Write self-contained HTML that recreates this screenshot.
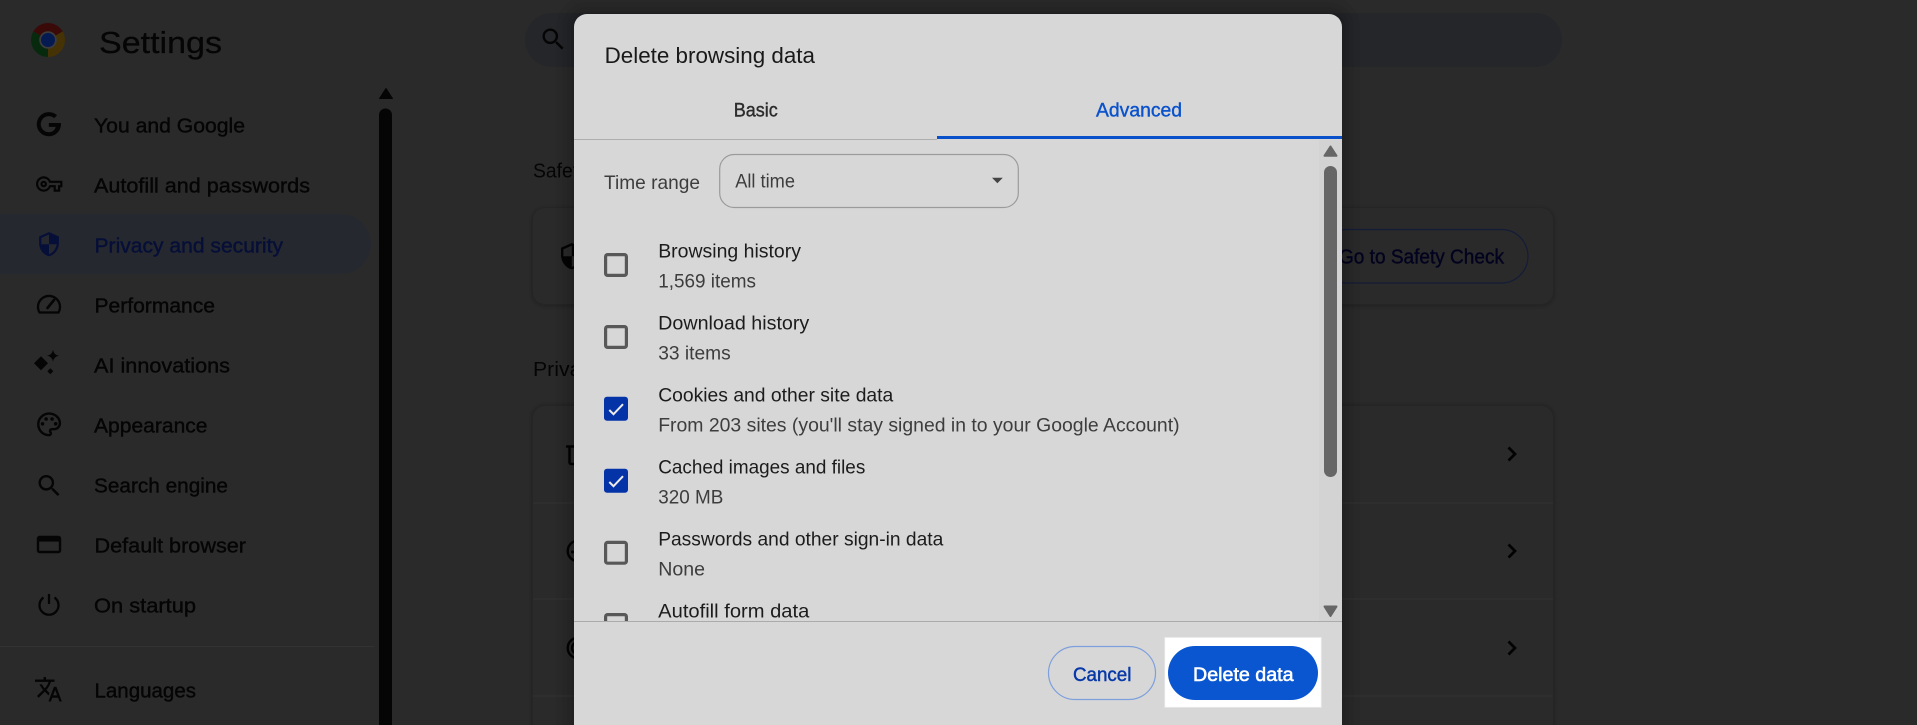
<!DOCTYPE html>
<html lang="en"><head><meta charset="utf-8"><title>Settings</title>
<style>
html,body{margin:0;padding:0;width:1917px;height:725px;overflow:hidden;background:#2a2a2a}
svg{display:block}
text{font-family:"Liberation Sans",sans-serif;white-space:pre}
.n{font-size:20.5px;fill:#050505;stroke:#050505;stroke-width:.4}
.l{font-size:19.5px;fill:#1c1c1c}
.s{font-size:19.5px;fill:#3d3d3d}
.i{fill:#050505}
</style></head><body>
<svg width="1917" height="725" viewBox="0 0 1917 725" xmlns="http://www.w3.org/2000/svg">
<defs>
<path id="sec" d="M12 1 3 5v6c0 5.55 3.84 10.74 9 12 5.16-1.26 9-6.45 9-12V5l-9-4zm0 10.99h7c-.53 4.12-3.28 7.79-7 8.94V12H5V6.3l7-3.11v8.8z"/>
<path id="srch" d="M15.5 14h-.79l-.28-.27A6.471 6.471 0 0 0 16 9.5 6.5 6.5 0 1 0 9.5 16c1.61 0 3.09-.59 4.23-1.57l.27.28v.79l5 4.99L20.49 19l-4.99-5zm-6 0C7.01 14 5 11.99 5 9.5S7.01 5 9.5 5 14 7.01 14 9.5 11.99 14 9.5 14z"/>
</defs>
<rect width="1917" height="725" fill="#2a2a2a"/>

<!-- header -->
<path d="M48 40 L62.7 31.5 A17 17 0 0 0 33.3 31.5 Z" fill="#3a0a08"/>
<path d="M48 40 L33.3 31.5 A17 17 0 0 0 48 57 Z" fill="#072a0e"/>
<path d="M48 40 L48 57 A17 17 0 0 0 62.7 31.5 Z" fill="#463305"/>
<circle cx="48" cy="40" r="8.800" fill="#3c3c3c"/><circle cx="48" cy="40" r="7" fill="#061a52"/>
<text x="99" y="53" font-size="31" fill="#050505" stroke="#050505" stroke-width=".25" textLength="123" lengthAdjust="spacingAndGlyphs">Settings</text>
<rect x="525" y="13" width="1037" height="54" rx="27" fill="#25262a"/>
<use href="#srch" transform="translate(538.9 24.9) scale(1.2)" fill="#050505"/>

<!-- sidebar -->
<path d="M0 214 H341 a30 30 0 0 1 0 60 H0 Z" fill="#25282f"/>
<rect x="0" y="646" width="374" height="1" fill="#323232"/>
<path d="M386 88.500 L392.500 98.500 H379.500 Z" fill="#050505" stroke="#050505" stroke-linejoin="round"/>
<path d="M379 115 a6.500 6.500 0 0 1 13 0 V725 H379 Z" fill="#050505"/>

<g class="i">
<path transform="translate(33 108.6) scale(1.3)" d="M21.35 11.1H12.18v2.98h5.27c-.5 2.6-2.77 4.1-5.27 4.1a6.2 6.2 0 1 1 4.1-10.84l2.2-2.2A9.3 9.3 0 0 0 12.18 2.7 9.3 9.3 0 1 0 21.5 12c0-.3-.05-.6-.15-.9z"/>
<path transform="translate(36 170.8) scale(1.1)" d="M22 19h-6v-4h-2.68c-1.14 2.42-3.6 4-6.32 4-3.86 0-7-3.14-7-7s3.14-7 7-7c2.72 0 5.17 1.58 6.32 4H24v6h-2v4zm-4-2h2v-4h2v-2H11.94l-.23-.67C11.01 8.34 9.11 7 7 7c-2.76 0-5 2.24-5 5s2.24 5 5 5c2.11 0 4.01-1.34 4.71-3.33l.23-.67H18v4zM7 15c-1.65 0-3-1.35-3-3s1.35-3 3-3 3 1.35 3 3-1.35 3-3 3zm0-4c-.55 0-1 .45-1 1s.45 1 1 1 1-.45 1-1-.45-1-1-1z"/>
<use href="#sec" transform="translate(35.8 231) scale(1.1)" fill="#060f38"/>
<path d="M39.5 312.5 a11 11 0 1 1 19 0 z" fill="none" stroke="#050505" stroke-width="2.3" stroke-linejoin="round"/>
<path d="M47.5 308 L54 300" stroke="#050505" stroke-width="2.6" stroke-linecap="round"/>
<path d="M41 356.3 L48 363.3 L41 370.3 L34 363.3 Z"/>
<path d="M53 349.7 Q53.8 354.9 59 355.7 Q53.8 356.5 53 361.7 Q52.2 356.5 47 355.7 Q52.2 354.9 53 349.7 Z"/>
<path d="M50.3 368.3 L53.3 371.3 L50.3 374.3 L47.3 371.3 Z"/>
<g transform="translate(34.7 410) scale(1.2)">
<path d="M12 22C6.49 22 2 17.51 2 12S6.49 2 12 2s10 4.04 10 9c0 3.31-2.69 6-6 6h-1.77c-.28 0-.5.22-.5.5 0 .12.05.23.13.33.41.47.64 1.06.64 1.67A2.5 2.5 0 0 1 12 22zm0-18c-4.41 0-8 3.59-8 8s3.59 8 8 8c.28 0 .5-.22.5-.5a.54.54 0 0 0-.14-.35c-.41-.46-.63-1.05-.63-1.65a2.5 2.5 0 0 1 2.5-2.5H16c2.21 0 4-1.79 4-4 0-3.86-3.59-7-8-7z"/>
<circle cx="6.5" cy="11.5" r="1.5"/><circle cx="9.5" cy="7.5" r="1.5"/><circle cx="14.5" cy="7.5" r="1.5"/><circle cx="17.5" cy="11.5" r="1.5"/>
</g>
<use href="#srch" transform="translate(34.9 471.4) scale(1.2)"/>
<rect x="38" y="537" width="22" height="15" rx="1.5" fill="none" stroke="#050505" stroke-width="2.4"/>
<rect x="38" y="537" width="22" height="4.6"/>
<path d="M43.5 597.5 a9.5 9.5 0 1 0 11 0 M49 594 V604" fill="none" stroke="#050505" stroke-width="2.3"/>
<path transform="translate(33.8 674.6) scale(1.22)" d="M12.87 15.07l-2.54-2.51.03-.03A17.52 17.52 0 0 0 14.07 6H17V4h-7V2H8v2H1v1.99h11.17C11.5 7.92 10.44 9.75 9 11.35 8.07 10.32 7.3 9.19 6.69 8h-2c.73 1.63 1.73 3.17 2.98 4.56l-5.09 5.02L4 19l5-5 3.11 3.11.76-2.04zM18.5 10h-2L12 22h2l1.12-3h4.75L21 22h2l-4.5-12zm-2.62 7l1.62-4.33L19.12 17h-3.24z"/>
</g>

<text class="n" x="94" y="132.7" textLength="151" lengthAdjust="spacingAndGlyphs">You and Google</text>
<text class="n" x="94" y="192.7" textLength="216" lengthAdjust="spacingAndGlyphs">Autofill and passwords</text>
<text class="n" x="94.500" y="252.7" textLength="188.500" lengthAdjust="spacingAndGlyphs" style="fill:#060f38;stroke:#060f38">Privacy and security</text>
<text class="n" x="94.500" y="312.7" textLength="120.500" lengthAdjust="spacingAndGlyphs">Performance</text>
<text class="n" x="94" y="372.7" textLength="136" lengthAdjust="spacingAndGlyphs">AI innovations</text>
<text class="n" x="94" y="432.7" textLength="113.500" lengthAdjust="spacingAndGlyphs">Appearance</text>
<text class="n" x="94" y="492.7" textLength="134" lengthAdjust="spacingAndGlyphs">Search engine</text>
<text class="n" x="94.500" y="552.7" textLength="151.500" lengthAdjust="spacingAndGlyphs">Default browser</text>
<text class="n" x="94" y="612.7" textLength="102" lengthAdjust="spacingAndGlyphs">On startup</text>
<text class="n" x="94.500" y="697.7" textLength="101.500" lengthAdjust="spacingAndGlyphs">Languages</text>

<!-- main content -->
<text x="533" y="177.7" font-size="20.5" fill="#050505" textLength="115" lengthAdjust="spacingAndGlyphs">Safety Check</text>
<g fill="#000">
<rect x="529" y="205" width="1028" height="104" rx="16" opacity=".04"/>
<rect x="531" y="207" width="1024" height="100" rx="14" opacity=".06"/>
<path d="M529 725 V418 a16 16 0 0 1 16-16 H1541 a16 16 0 0 1 16 16 V725 Z" opacity=".04"/>
<path d="M531 725 V418 a14 14 0 0 1 14-14 H1541 a14 14 0 0 1 14 14 V725 Z" opacity=".06"/>
</g>
<rect x="533" y="208" width="1020" height="96" rx="12" fill="#2a2a2a"/>
<use href="#sec" transform="translate(557.4 241.8) scale(1.2)" fill="#050505"/>
<rect x="1320" y="229.500" width="208" height="53.500" rx="26.700" fill="none" stroke="#141c38" stroke-width="1.2"/>
<text x="1339" y="263.3" font-size="20.5" fill="#02031f" stroke="#02031f" stroke-width=".4" textLength="165" lengthAdjust="spacingAndGlyphs">Go to Safety Check</text>
<text x="533" y="376" font-size="20.5" fill="#050505" textLength="190" lengthAdjust="spacingAndGlyphs">Privacy and security</text>
<path d="M533 725 V418 a12 12 0 0 1 12-12 H1541 a12 12 0 0 1 12 12 V725 Z" fill="#2a2a2a"/>
<rect x="533" y="502.500" width="1020" height="1" fill="#313131"/>
<rect x="533" y="598.500" width="1020" height="1" fill="#313131"/>
<rect x="533" y="695.500" width="1020" height="1" fill="#313131"/>
<path d="M566 446.500 H590 M569.500 447 V462 q0 2 2 2 H590" fill="none" stroke="#050505" stroke-width="2.5"/>
<circle cx="578" cy="551" r="10.300" fill="none" stroke="#050505" stroke-width="2.400"/><circle cx="572.500" cy="552" r="1.500" fill="#050505"/>
<circle cx="578" cy="648" r="10.300" fill="none" stroke="#050505" stroke-width="2.400"/><circle cx="578" cy="648" r="6" fill="none" stroke="#050505" stroke-width="2.200"/>
<g fill="none" stroke="#020202" stroke-width="2.700">
<path d="M1508.500 447.500 l6.500 6.500 -6.500 6.500"/>
<path d="M1508.500 544.500 l6.500 6.500 -6.500 6.500"/>
<path d="M1508.500 641.500 l6.500 6.500 -6.500 6.500"/>
</g>

<!-- dialog shadow -->
<g fill="#000">
<path d="M556 725 V27 a31 31 0 0 1 31-31 H1329 a31 31 0 0 1 31 31 V725 Z" opacity=".03"/>
<path d="M562 725 V27 a25 25 0 0 1 25-25 H1329 a25 25 0 0 1 25 25 V725 Z" opacity=".03"/>
<path d="M567 725 V27 a20 20 0 0 1 20-20 H1329 a20 20 0 0 1 20 20 V725 Z" opacity=".04"/>
<path d="M571 725 V27 a16 16 0 0 1 16-16 H1329 a16 16 0 0 1 16 16 V725 Z" opacity=".05"/>
</g>
<!-- dialog -->
<path d="M574 725 V27 a13 13 0 0 1 13-13 H1329 a13 13 0 0 1 13 13 V725 Z" fill="#d7d7d7"/>
<text x="604.600" y="63" font-size="22.5" fill="#191919" textLength="210.400" lengthAdjust="spacingAndGlyphs">Delete browsing data</text>
<text x="733.7" y="116.4" font-size="19.5" fill="#2c2c2c" stroke="#2c2c2c" stroke-width=".4" textLength="44" lengthAdjust="spacingAndGlyphs">Basic</text>
<text x="1096" y="116.4" font-size="19.5" fill="#0a52cc" stroke="#0a52cc" stroke-width=".4" textLength="86" lengthAdjust="spacingAndGlyphs">Advanced</text>
<rect x="574" y="139" width="363" height="1" fill="#aeaeae"/>
<rect x="937" y="136" width="405" height="3" fill="#0950cb"/>
<rect x="1319" y="140" width="23" height="481" fill="#d3d3d3"/>
<text class="s" x="604" y="189.200" textLength="96" lengthAdjust="spacingAndGlyphs">Time range</text>
<rect x="719.7" y="154.500" width="298.600" height="53" rx="14.500" fill="none" stroke="#9b9b9b" stroke-width="1.200"/>
<text class="s" x="735.200" y="187.600" textLength="59.800" lengthAdjust="spacingAndGlyphs">All time</text>
<path d="M992 177.800 H1002.800 L997.400 183.300 Z" fill="#444"/>

<g fill="none" stroke="#585858" stroke-width="3.200">
<rect x="605.600" y="254.600" width="20.800" height="20.800" rx="2"/>
<rect x="605.600" y="326.600" width="20.800" height="20.800" rx="2"/>
<rect x="605.600" y="542.400" width="20.800" height="20.800" rx="2"/>
<rect x="605.600" y="614.600" width="20.800" height="20.800" rx="2"/>
</g>
<rect x="604" y="396.700" width="24" height="24" rx="3" fill="#0433a8"/>
<rect x="604" y="468.700" width="24" height="24" rx="3" fill="#0433a8"/>
<path d="M609.300 410 L613.500 414.200 L623 404.200" fill="none" stroke="#ececec" stroke-width="2"/>
<path d="M609.300 482 L613.500 486.200 L623 476.200" fill="none" stroke="#ececec" stroke-width="2"/>

<text class="l" x="658.200" y="257.600" textLength="142.800" lengthAdjust="spacingAndGlyphs">Browsing history</text>
<text class="s" x="658.200" y="287.600" textLength="97.800" lengthAdjust="spacingAndGlyphs">1,569 items</text>
<text class="l" x="658.200" y="329.600" textLength="151.100" lengthAdjust="spacingAndGlyphs">Download history</text>
<text class="s" x="658.200" y="359.600" textLength="72.500" lengthAdjust="spacingAndGlyphs">33 items</text>
<text class="l" x="658.200" y="401.600" textLength="235.100" lengthAdjust="spacingAndGlyphs">Cookies and other site data</text>
<text class="s" x="658.200" y="431.600" textLength="521.400" lengthAdjust="spacingAndGlyphs">From 203 sites (you'll stay signed in to your Google Account)</text>
<text class="l" x="658.200" y="473.600" textLength="207.100" lengthAdjust="spacingAndGlyphs">Cached images and files</text>
<text class="s" x="658.200" y="503.600" textLength="65.100" lengthAdjust="spacingAndGlyphs">320 MB</text>
<text class="l" x="658.200" y="545.600" textLength="285.100" lengthAdjust="spacingAndGlyphs">Passwords and other sign-in data</text>
<text class="s" x="658.200" y="575.600" textLength="46.800" lengthAdjust="spacingAndGlyphs">None</text>
<text class="l" x="658.200" y="617.600" textLength="151.100" lengthAdjust="spacingAndGlyphs">Autofill form data</text>

<!-- dialog scrollbar -->
<path d="M1330.500 146.500 L1336.500 155.800 H1324.500 Z" fill="#666" stroke="#666" stroke-width="2" stroke-linejoin="round"/>
<rect x="1324" y="166" width="13" height="311" rx="6.500" fill="#666"/>
<path d="M1324.500 606.500 H1336.500 L1330.500 616 Z" fill="#666" stroke="#666" stroke-width="2" stroke-linejoin="round"/>

<!-- footer -->
<rect x="574" y="621" width="768" height="104" fill="#d7d7d7"/>
<rect x="574" y="621" width="768" height="1" fill="#ababab"/>
<rect x="1048.500" y="646.500" width="107" height="53" rx="26.500" fill="none" stroke="#7d9fdc" stroke-width="1.200"/>
<text x="1073" y="681" font-size="19.500" fill="#0638a8" stroke="#0638a8" stroke-width=".45" textLength="58.400" lengthAdjust="spacingAndGlyphs">Cancel</text>
<rect x="1164.800" y="637.500" width="156.400" height="69.800" fill="#fff" stroke="#ececec" stroke-width=".8"/>
<rect x="1168" y="646" width="150" height="54" rx="27" fill="#0a56d0"/>
<text x="1193" y="681" font-size="19.500" fill="#fff" stroke="#fff" stroke-width=".55" textLength="100.600" lengthAdjust="spacingAndGlyphs">Delete data</text>
</svg>
</body></html>
